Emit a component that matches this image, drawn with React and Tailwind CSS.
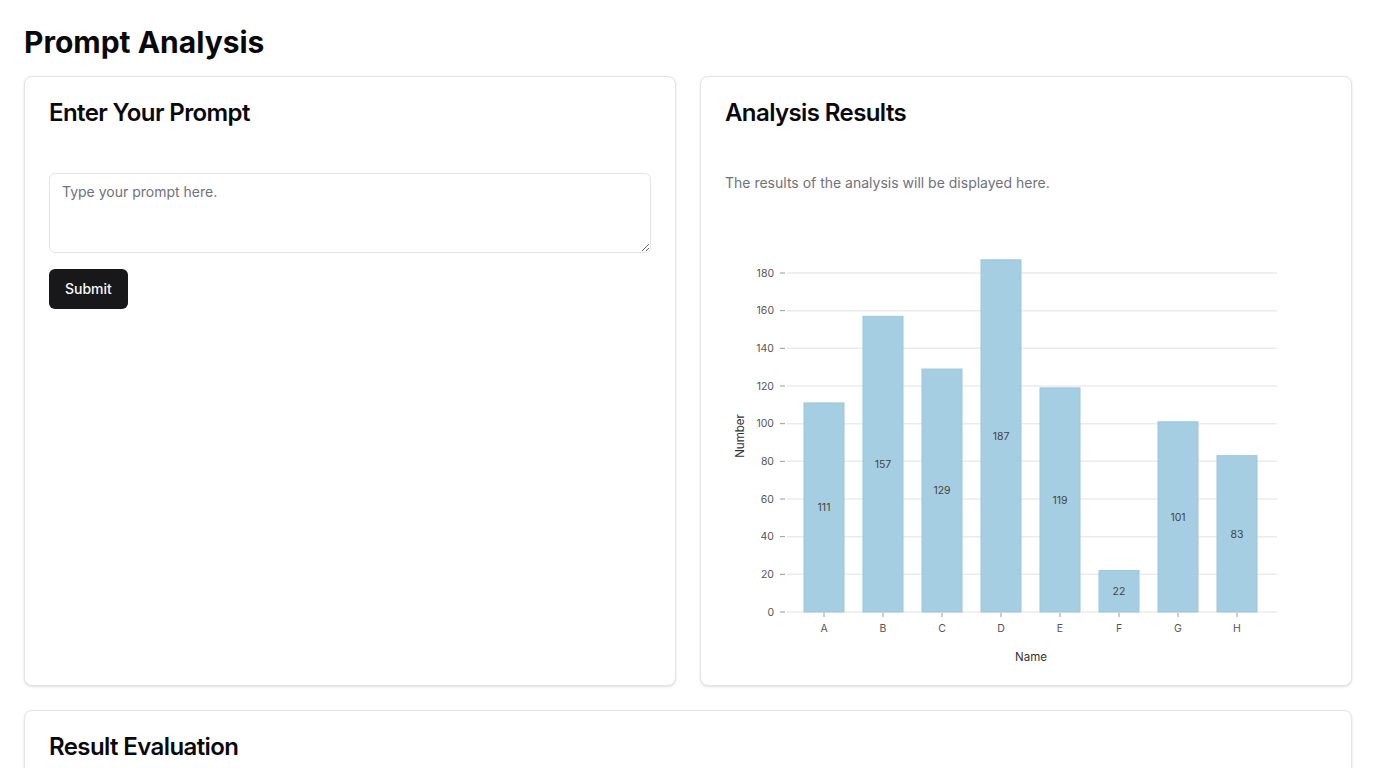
import React from "react";

const data = [
  { name: "A", value: 111 },
  { name: "B", value: 157 },
  { name: "C", value: 129 },
  { name: "D", value: 187 },
  { name: "E", value: 119 },
  { name: "F", value: 22 },
  { name: "G", value: 101 },
  { name: "H", value: 83 },
];

const ticks = [0, 20, 40, 60, 80, 100, 120, 140, 160, 180];

// chart geometry (svg coords)
const baseY = 419;
const scale = 339 / 180;
const y = (v) => baseY - v * scale;

const BarChart = () => (
  <svg width="602" height="468" viewBox="0 0 602 468" className="block overflow-visible">
    {ticks.map((t) => (
      <g key={t}>
        <line x1="62" x2="552" y1={y(t)} y2={y(t)} stroke="#ebebeb" strokeWidth="1.5" />
        <line x1="55" x2="60" y1={y(t)} y2={y(t)} stroke="#999" strokeWidth="1" />
        <text x="49" y={y(t)} dy="0.35em" textAnchor="end" fontSize="10.5" fill="#555">
          {t}
        </text>
      </g>
    ))}
    {data.map((d, i) => {
      const cx = 99 + i * 59;
      const top = y(d.value);
      return (
        <g key={d.name}>
          <rect x={cx - 20} y={top} width="40" height={baseY - top} fill="#a6cee3" stroke="#9cc6dd" strokeWidth="1" />
          <text x={cx} y={(top + baseY) / 2} dy="0.35em" textAnchor="middle" fontSize="10.5" fill="#444">
            {d.value}
          </text>
          <line x1={cx} x2={cx} y1={baseY + 1} y2={baseY + 5} stroke="#999" strokeWidth="1" />
          <text x={cx} y="435" dy="0.35em" textAnchor="middle" fontSize="10.5" fill="#555">
            {d.name}
          </text>
        </g>
      );
    })}
    <text x="306" y="464" dy="0.35em" textAnchor="middle" fontSize="11.5" fill="#333">
      Name
    </text>
    <text x="0" y="0" transform="translate(19 243) rotate(-90)" textAnchor="middle" fontSize="11.5" fill="#333">
      Number
    </text>
  </svg>
);

const Card = ({ title, children }) => (
  <div className="rounded-lg border border-[#e4e4e7] bg-white shadow-sm">
    <div className="flex flex-col gap-1.5 p-6">
      <h3 className="text-2xl font-semibold leading-none tracking-tight">{title}</h3>
      <p className="h-[18px] text-sm text-[#71717a]"></p>
    </div>
    <div className="p-6 pt-0">{children}</div>
  </div>
);

export default function App() {
  return (
    <div className="min-h-screen bg-white p-6 text-[#09090b]" style={{ fontFamily: "Inter, 'Noto Sans', sans-serif" }}>
      <h1 className="mb-4 text-3xl font-bold">Prompt Analysis</h1>
      <div className="grid grid-cols-2 gap-6">
        <Card title="Enter Your Prompt">
          <textarea
            className="flex min-h-[80px] w-full rounded-md border border-[#e4e4e7] bg-white px-3 py-2 text-sm placeholder:text-[#71717a] focus:outline-none"
            placeholder="Type your prompt here."
          />
          <button className="mt-4 h-10 rounded-md bg-[#18181b] px-4 text-sm font-medium text-[#fafafa]">
            Submit
          </button>
        </Card>
        <Card title="Analysis Results">
          <p className="text-sm text-[#71717a]">The results of the analysis will be displayed here.</p>
          <BarChart />
        </Card>
      </div>
      <div className="mt-6">
        <Card title="Result Evaluation">
          <p className="text-sm text-[#71717a]">The evaluation of the results will be displayed here.</p>
        </Card>
      </div>
    </div>
  );
}
